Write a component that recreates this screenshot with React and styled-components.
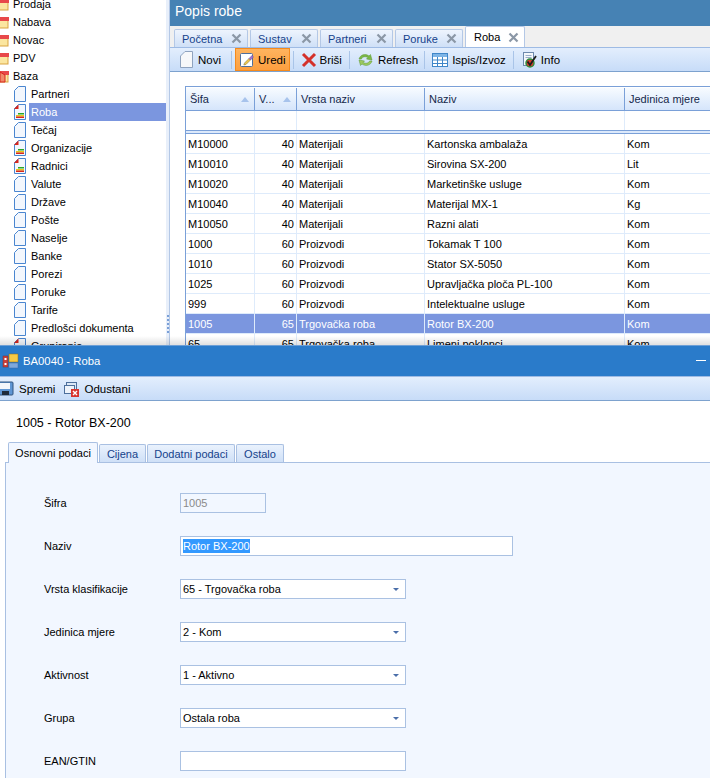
import React from "react";
import styled, { createGlobalStyle } from "styled-components";

const GlobalStyle = createGlobalStyle`
  html, body {
    margin: 0;
    padding: 0;
    background: #fff;
  }
  body {
    font-family: "Liberation Sans", Arial, sans-serif;
    font-size: 11px;
    color: #000;
  }
`;

const Page = styled.div`
  width: 710px;
  height: 778px;
  overflow: hidden;
  display: flex;
  flex-direction: column;
`;

const TopArea = styled.div`
  height: 345px;
  flex: none;
  display: flex;
  overflow: hidden;
  position: relative;

  &::after {
    content: "";
    position: absolute;
    left: 0;
    right: 0;
    bottom: 0;
    height: 9px;
    background: linear-gradient(rgba(0, 0, 0, 0), rgba(0, 0, 0, 0.12));
  }
`;

const Sidebar = styled.div`
  width: 166px;
  flex: none;
  overflow: hidden;
  background: #fff;
`;

const Tree = styled.ul`
  list-style: none;
  margin: -5px 0 0;
  padding: 0;
`;

const TreeRow = styled.li`
  height: 18px;
  display: flex;
  align-items: center;
  padding-left: ${(p) => (p.$child ? "13px" : "0")};
`;

const TreeLabel = styled.span`
  margin-left: 2px;
  padding: 0 2px;
  flex: ${(p) => (p.$selected ? 1 : "none")};
  height: 18px;
  line-height: 18px;
  white-space: nowrap;
  background: ${(p) => (p.$selected ? "#7b96df" : "transparent")};
  color: ${(p) => (p.$selected ? "#fff" : "#000")};
`;

const Splitter = styled.div`
  width: 3px;
  flex: none;
  background: #e8effa;
  border-right: 1px solid #b4c8e6;
  display: flex;
  align-items: flex-end;
  padding-bottom: 12px;
`;

const Grip = styled.div`
  width: 2px;
  height: 18px;
  margin-left: 1px;
  background: repeating-linear-gradient(#7aa0d8 0 2px, transparent 2px 4px);
`;

const MainPanel = styled.div`
  flex: 1;
  min-width: 0;
  display: flex;
  flex-direction: column;
`;

const PanelTitle = styled.div`
  height: 26px;
  flex: none;
  background: #4682b4;
  color: #fff;
  font-size: 14px;
  line-height: 23px;
  padding-left: 5px;
`;

const TabStrip = styled.div`
  height: 21px;
  flex: none;
  background: #f0f0f0;
  display: flex;
  align-items: flex-end;
  gap: 2px;
  padding-left: 4px;
`;

const DocTab = styled.div`
  width: ${(p) => p.$w}px;
  height: ${(p) => (p.$active ? 21 : 18)}px;
  box-sizing: border-box;
  display: flex;
  align-items: center;
  justify-content: space-between;
  padding: 0 5px 0 ${(p) => (p.$active ? 8 : 7)}px;
  border: 1px solid #b4c8e6;
  border-bottom: none;
  border-radius: 2px 2px 0 0;
  background: ${(p) =>
    p.$active ? "#fff" : "linear-gradient(#eef4fd, #cfe0f7)"};
  color: ${(p) => (p.$active ? "#000" : "#15428b")};
`;

const Toolbar = styled.div`
  height: 25px;
  flex: none;
  box-sizing: border-box;
  display: flex;
  align-items: center;
  background: linear-gradient(#e3eefd, #c7dcf8);
  border-top: 1px solid #9ebbe4;
  border-bottom: 1px solid #7da2ce;
  padding-left: ${(p) => p.$pad}px;
`;

const ToolButton = styled.div`
  height: 23px;
  box-sizing: border-box;
  display: flex;
  align-items: center;
  gap: ${(p) => p.$gap ?? 4}px;
  padding: 0 ${(p) => p.$end ?? p.$pad ?? 4}px 0 ${(p) => p.$pad ?? 4}px;
  font-size: 11.5px;
  white-space: nowrap;
  ${(p) =>
    p.$active &&
    `background: linear-gradient(#ffb45f, #fd9f3f); border: 1px solid #f58a1c;`}
`;

const ToolSep = styled.div`
  width: 1px;
  height: 18px;
  margin: 0 3px;
  background: #a9c4e8;
`;

const GridArea = styled.div`
  flex: 1;
  background: #fff;
  padding: 14px 0 0 15px;
  overflow: hidden;
`;

const DataGrid = styled.div`
  width: 540px;
  border-top: 1px solid #7aa0d8;
  border-left: 1px solid #7aa0d8;
  padding-top: 1px;
`;

const GridRow = styled.div`
  display: grid;
  grid-template-columns: 69px 42px 128px 200px 90px;
  height: ${(p) => p.$h}px;
  box-sizing: border-box;
`;

const HeadCell = styled.div`
  display: flex;
  align-items: center;
  justify-content: space-between;
  padding: 0 5px 0 4px;
  background: linear-gradient(#f7fbff, #d5e5fb);
  border-right: 1px solid #7aa0d8;
  border-bottom: 1px solid #7aa0d8;
  color: #15284b;
  overflow: hidden;
  white-space: nowrap;
`;

const SortArrow = styled.span`
  width: 0;
  height: 0;
  border-left: 4px solid transparent;
  border-right: 4px solid transparent;
  border-bottom: 5px solid #a7c3ec;
`;

const FilterCell = styled.div`
  border-right: 1px solid #deebfb;
  background: #fff;
`;

const GroupSep = styled.div`
  height: 4px;
  box-sizing: border-box;
  background: #dce9fb;
  border-top: 1px solid #7aa0d8;
  border-bottom: 1px solid #7aa0d8;
`;

const Cell = styled.div`
  display: flex;
  align-items: center;
  justify-content: ${(p) => (p.$right ? "flex-end" : "flex-start")};
  padding: 0 2px;
  white-space: nowrap;
  overflow: hidden;
  color: ${(p) => (p.$selected ? "#fff" : "#000")};
  background: ${(p) => (p.$selected ? "#7b96df" : "#fff")};
  border-right: 1px solid #deebfb;
  border-bottom: 1px solid #deebfb;
`;

const EditWindow = styled.div`
  flex: 1;
  display: flex;
  flex-direction: column;
  min-height: 0;
  border-top: 1px solid #6d9fd6;
`;

const WindowTitle = styled.div`
  height: 30px;
  flex: none;
  display: flex;
  align-items: center;
  background: #2a7bca;
  color: #fff;
  font-size: 11.3px;
  padding-left: 2px;
  gap: 4px;
  position: relative;
`;

const MinimizeMark = styled.span`
  position: absolute;
  right: 4px;
  top: 14px;
  width: 10px;
  height: 1px;
  background: #fff;
`;

const Heading = styled.div`
  height: 41px;
  flex: none;
  box-sizing: border-box;
  background: #fff;
  padding: 14px 0 0 16px;
  font-size: 12.5px;
  line-height: 16px;
`;

const FormTabs = styled.div`
  height: 20px;
  flex: none;
  display: flex;
  align-items: flex-end;
  gap: 1px;
  padding-left: 8px;
  background: #fff;
`;

const FormTab = styled.div`
  width: ${(p) => p.$w}px;
  height: ${(p) => (p.$active ? 21 : 18)}px;
  box-sizing: border-box;
  display: flex;
  align-items: center;
  justify-content: center;
  border: 1px solid #a9c0e2;
  border-bottom: none;
  border-radius: 2px 2px 0 0;
  background: ${(p) =>
    p.$active ? "#f2f7ff" : "linear-gradient(#eaf2fd, #cfe0f7)"};
  color: ${(p) => (p.$active ? "#000" : "#15428b")};
  margin-bottom: ${(p) => (p.$active ? "-1px" : "0")};
  position: relative;
`;

const FormBody = styled.div`
  flex: 1;
  margin-left: 5px;
  background: #f2f7ff;
  border-top: 1px solid #a9c0e2;
  border-left: 1px solid #a9c0e2;
  padding: 30px 0 0 38px;
  display: flex;
  flex-direction: column;
  gap: 23px;
`;

const FieldRow = styled.div`
  display: flex;
  align-items: center;
  height: 20px;
  flex: none;
`;

const FieldLabel = styled.label`
  width: 136px;
  flex: none;
`;

const TextBox = styled.div`
  width: ${(p) => p.$w}px;
  height: 20px;
  box-sizing: border-box;
  border: 1px solid #aac1e2;
  background: ${(p) => (p.$disabled ? "#f2f7ff" : "#fff")};
  color: ${(p) => (p.$disabled ? "#8a8a8a" : "#000")};
  display: flex;
  align-items: center;
  justify-content: space-between;
  padding: 0 6px 0 2px;
`;

const SelectedText = styled.span`
  background: #3399ff;
  color: #fff;
  line-height: 14px;
`;

const DropArrow = styled.span`
  width: 0;
  height: 0;
  border-left: 3px solid transparent;
  border-right: 3px solid transparent;
  border-top: 3px solid #4a6ea9;
`;

const CloseIcon = () => (
  <svg width="11" height="11" viewBox="0 0 11 11" style={{ flex: "none" }}>
    <path d="M1.5 1.5 L9.5 9.5 M9.5 1.5 L1.5 9.5" stroke="#8b97a6" strokeWidth="2.2" />
  </svg>
);

const DocIcon = ({ bars }) => (
  <svg width="14" height="16" viewBox="0 0 14 16" style={{ flex: "none" }}>
    <path d="M5.5 0.5H12.5V15.5H1.5V4.5Z" fill="#f3f7fd" stroke="#4a86d0" />
    {bars && <path d="M1 5 L5.5 0.5 L5.5 5Z" fill="#d8261c" />}
    {bars && (
      <>
        <rect x="5" y="9" width="6" height="1.5" fill="#29a829" />
        <rect x="3" y="11" width="8" height="1.5" fill="#e6c619" />
        <rect x="3" y="12.5" width="8" height="1.5" fill="#d8261c" />
      </>
    )}
  </svg>
);

const FolderIcon = ({ open }) => (
  <svg width="9" height="14" viewBox="0 0 9 14" style={{ flex: "none" }}>
    <rect x="-3" y="5" width="11" height="8" fill="#fbe6a0" stroke="#d9a441" />
    <rect x="-3" y="2" width="12" height="4" fill="#e8484a" />
    {open && <path d="M0 3 L5 6 V13 H0Z" fill="#f08a6a" stroke="#d8261c" />}
  </svg>
);

const NewIcon = () => (
  <svg width="15" height="17" viewBox="0 0 15 17">
    <path d="M6 0.5H13.5V16.5H1.5V5Z" fill="#f7f8fa" stroke="#8fa3bf" />
  </svg>
);

const EditIcon = () => (
  <svg width="16" height="16" viewBox="0 0 16 16">
    <rect x="1.5" y="1.5" width="12" height="13" rx="1" fill="#fff" stroke="#4f6f9c" />
    <path d="M5.5 11 L10 6.5 L11.5 8 L7 12.5 L4.8 13Z" fill="#f2c94c" stroke="#7a6a30" strokeWidth="0.5" />
    <path d="M10 6.5 L13 3.5 L14.5 5 L11.5 8Z" fill="#a06fd0" stroke="#6b4a8a" strokeWidth="0.5" />
  </svg>
);

const DeleteIcon = () => (
  <svg width="16" height="16" viewBox="0 0 16 16">
    <path d="M2 2 L14 14 M14 2 L2 14" stroke="#d4302a" strokeWidth="3" />
  </svg>
);

const RefreshIcon = () => (
  <svg width="17" height="16" viewBox="0 0 17 16">
    <path d="M2 7 C3 3 8 1 12 4 L13.5 2.5 L15 8 L9.5 7 L11 5.5 C8 4 5 5 4.5 7Z" fill="#7cb848" stroke="#5b9632" strokeWidth="0.5" />
    <path d="M15 9 C14 13 9 15 5 12 L3.5 13.5 L2 8 L7.5 9 L6 10.5 C9 12 12 11 12.5 9Z" fill="#9cc95e" stroke="#5b9632" strokeWidth="0.5" />
  </svg>
);

const TableIcon = () => (
  <svg width="16" height="14" viewBox="0 0 16 14">
    <rect x="0.5" y="0.5" width="15" height="13" fill="#fff" stroke="#3f86c9" />
    <rect x="1" y="1" width="14" height="3" fill="#7db4e6" />
    <path d="M0.5 7H15.5M0.5 10.5H15.5M5.5 4V13.5M10.5 4V13.5" stroke="#3f86c9" fill="none" />
  </svg>
);

const InfoIcon = () => (
  <svg width="16" height="16" viewBox="0 0 16 16">
    <rect x="1.5" y="0.5" width="10" height="13" fill="#f4f7fb" stroke="#6d89ad" />
    <path d="M3.5 3.5H9.5M3.5 5.5H9.5" stroke="#9aaec8" />
    <circle cx="8" cy="11" r="4" fill="#d23b2e" stroke="#2f8f3c" strokeWidth="1.5" />
    <path d="M5.5 9.5 L8 13 L14 4" stroke="#1d1d1d" strokeWidth="1.8" fill="none" />
  </svg>
);

const WindowIcon = () => (
  <svg width="17" height="16" viewBox="0 0 17 16">
    <rect x="1" y="3" width="5" height="11" fill="#c8403c" stroke="#7f2b2b" strokeWidth="0.5" />
    <rect x="7" y="1" width="9" height="8" fill="#f6c945" stroke="#8c6d1f" strokeWidth="0.5" />
    <rect x="7" y="10" width="9" height="5" fill="#7fa8dc" stroke="#3f6aa8" strokeWidth="0.5" />
    <rect x="2.5" y="5" width="2" height="2" fill="#fff" />
    <rect x="2.5" y="10" width="2" height="2" fill="#fff" />
  </svg>
);

const SaveIcon = () => (
  <svg width="14" height="15" viewBox="0 0 14 15">
    <rect x="-2" y="1" width="15" height="13" rx="1" fill="#5f96d4" stroke="#33557f" />
    <rect x="0" y="2" width="10" height="6" fill="#f3f6fb" />
    <rect x="2" y="10" width="7" height="4" fill="#1f2a3a" />
  </svg>
);

const CancelIcon = () => (
  <svg width="16" height="16" viewBox="0 0 16 16">
    <rect x="2.5" y="1.5" width="10" height="8" fill="#dbe7f6" stroke="#4d6f9c" />
    <rect x="0.5" y="4.5" width="10" height="8" fill="#eef3fa" stroke="#4d6f9c" />
    <rect x="7" y="8" width="8" height="8" fill="#d8352e" />
    <path d="M9 10 L13 14 M13 10 L9 14" stroke="#fff" strokeWidth="1.4" />
  </svg>
);

const folders = ["Prodaja", "Nabava", "Novac", "PDV"];

const treeItems = [
  { name: "Partneri" },
  { name: "Roba", bars: true, selected: true },
  { name: "Tečaj" },
  { name: "Organizacije", bars: true },
  { name: "Radnici", bars: true },
  { name: "Valute" },
  { name: "Države" },
  { name: "Pošte" },
  { name: "Naselje" },
  { name: "Banke" },
  { name: "Porezi" },
  { name: "Poruke" },
  { name: "Tarife" },
  { name: "Predlošci dokumenta" },
  { name: "Grupiranje", bars: true },
];

const docTabs = [
  { name: "Početna", w: 74 },
  { name: "Sustav", w: 68 },
  { name: "Partneri", w: 73 },
  { name: "Poruke", w: 68 },
  { name: "Roba", w: 60, active: true },
];

const rows = [
  ["M10000", "40", "Materijali", "Kartonska ambalaža", "Kom"],
  ["M10010", "40", "Materijali", "Sirovina SX-200", "Lit"],
  ["M10020", "40", "Materijali", "Marketinške usluge", "Kom"],
  ["M10040", "40", "Materijali", "Materijal MX-1", "Kg"],
  ["M10050", "40", "Materijali", "Razni alati", "Kom"],
  ["1000", "60", "Proizvodi", "Tokamak T 100", "Kom"],
  ["1010", "60", "Proizvodi", "Stator SX-5050", "Kom"],
  ["1025", "60", "Proizvodi", "Upravljačka ploča PL-100", "Kom"],
  ["999", "60", "Proizvodi", "Intelektualne usluge", "Kom"],
  ["1005", "65", "Trgovačka roba", "Rotor BX-200", "Kom"],
  ["65", "65", "Trgovačka roba", "Limeni poklonci", "Kom"],
];

const fields = [
  { label: "Vrsta klasifikacije", value: "65 - Trgovačka roba" },
  { label: "Jedinica mjere", value: "2 - Kom" },
  { label: "Aktivnost", value: "1 - Aktivno" },
  { label: "Grupa", value: "Ostala roba" },
];

const App = () => {
  return (
    <Page>
      <GlobalStyle />
      <TopArea>
        <Sidebar>
          <Tree>
            {folders.map((name) => (
              <TreeRow key={name}>
                <FolderIcon />
                <TreeLabel>{name}</TreeLabel>
              </TreeRow>
            ))}
            <TreeRow>
              <FolderIcon open />
              <TreeLabel>Baza</TreeLabel>
            </TreeRow>
            {treeItems.map((item) => (
              <TreeRow key={item.name} $child>
                <DocIcon bars={item.bars} />
                <TreeLabel $selected={item.selected}>{item.name}</TreeLabel>
              </TreeRow>
            ))}
          </Tree>
        </Sidebar>
        <Splitter>
          <Grip />
        </Splitter>
        <MainPanel>
          <PanelTitle>Popis robe</PanelTitle>
          <TabStrip>
            {docTabs.map((tab) => (
              <DocTab key={tab.name} $w={tab.w} $active={tab.active}>
                {tab.name}
                <CloseIcon />
              </DocTab>
            ))}
          </TabStrip>
          <Toolbar $pad={4}>
            <ToolButton $pad={5} $end={7}>
              <NewIcon />
              Novi
            </ToolButton>
            <ToolSep />
            <ToolButton $active $pad={3} $gap={3}>
              <EditIcon />
              Uredi
            </ToolButton>
            <ToolSep />
            <ToolButton $pad={4} $gap={3}>
              <DeleteIcon />
              Briši
            </ToolButton>
            <ToolSep />
            <ToolButton $gap={4} $end={3}>
              <RefreshIcon />
              Refresh
            </ToolButton>
            <ToolSep />
            <ToolButton>
              <TableIcon />
              Ispis/Izvoz
            </ToolButton>
            <ToolSep />
            <ToolButton $pad={5} $gap={3}>
              <InfoIcon />
              Info
            </ToolButton>
          </Toolbar>
          <GridArea>
            <DataGrid>
              <GridRow $h={23}>
                <HeadCell>
                  Šifa
                  <SortArrow />
                </HeadCell>
                <HeadCell>
                  V...
                  <SortArrow />
                </HeadCell>
                <HeadCell>Vrsta naziv</HeadCell>
                <HeadCell>Naziv</HeadCell>
                <HeadCell>Jedinica mjere</HeadCell>
              </GridRow>
              <GridRow $h={19}>
                <FilterCell />
                <FilterCell />
                <FilterCell />
                <FilterCell />
                <FilterCell />
              </GridRow>
              <GroupSep />
              {rows.map((row) => {
                const selected = row[0] === "1005";
                return (
                  <GridRow key={row[0]} $h={20}>
                    {row.map((value, i) => (
                      <Cell key={i} $right={i === 1} $selected={selected}>
                        {value}
                      </Cell>
                    ))}
                  </GridRow>
                );
              })}
            </DataGrid>
          </GridArea>
        </MainPanel>
      </TopArea>
      <EditWindow>
        <WindowTitle>
          <WindowIcon />
          BA0040 - Roba
          <MinimizeMark />
        </WindowTitle>
        <Toolbar $pad={0}>
          <ToolButton $pad={0} $gap={5}>
            <SaveIcon />
            Spremi
          </ToolButton>
          <ToolButton $pad={9} $gap={4}>
            <CancelIcon />
            Odustani
          </ToolButton>
        </Toolbar>
        <Heading>1005 - Rotor BX-200</Heading>
        <FormTabs>
          <FormTab $w={90} $active>
            Osnovni podaci
          </FormTab>
          <FormTab $w={47}>Cijena</FormTab>
          <FormTab $w={88}>Dodatni podaci</FormTab>
          <FormTab $w={48}>Ostalo</FormTab>
        </FormTabs>
        <FormBody>
          <FieldRow>
            <FieldLabel>Šifra</FieldLabel>
            <TextBox $w={86} $disabled>
              1005
            </TextBox>
          </FieldRow>
          <FieldRow>
            <FieldLabel>Naziv</FieldLabel>
            <TextBox $w={333}>
              <SelectedText>Rotor BX-200</SelectedText>
            </TextBox>
          </FieldRow>
          {fields.map((field) => (
            <FieldRow key={field.label}>
              <FieldLabel>{field.label}</FieldLabel>
              <TextBox $w={226}>
                {field.value}
                <DropArrow />
              </TextBox>
            </FieldRow>
          ))}
          <FieldRow>
            <FieldLabel>EAN/GTIN</FieldLabel>
            <TextBox $w={226} />
          </FieldRow>
        </FormBody>
      </EditWindow>
    </Page>
  );
};

export default App;
